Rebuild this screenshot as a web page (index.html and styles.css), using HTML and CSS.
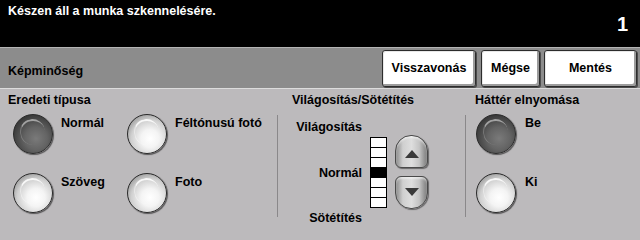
FILE: index.html
```html
<!DOCTYPE html>
<html lang="hu">
<head>
<meta charset="utf-8">
<title>Képminőség</title>
<link rel="stylesheet" href="styles.css">
</head>
<body>
<div class="screen">
  <header class="status">
    <div class="msg">Készen áll a munka szkennelésére.</div>
    <div class="count">1</div>
  </header>
  <div class="toolbar">
    <div class="title">Képminőség</div>
    <div class="actions">
      <button class="btn btn-undo">Visszavonás</button>
      <button class="btn btn-cancel">Mégse</button>
      <button class="btn btn-save">Mentés</button>
    </div>
  </div>
  <div class="panel">
    <section class="group group-type">
      <h2 class="group-title">Eredeti típusa</h2>
      <div class="group-body">
        <div class="radio-grid">
          <div class="option"><span class="radio on"></span><span class="label">Normál</span></div>
          <div class="option"><span class="radio"></span><span class="label">Féltónusú fotó</span></div>
          <div class="option"><span class="radio"></span><span class="label">Szöveg</span></div>
          <div class="option"><span class="radio"></span><span class="label">Foto</span></div>
        </div>
      </div>
    </section>
    <section class="group group-density">
      <h2 class="group-title">Világosítás/Sötétítés</h2>
      <div class="group-body">
        <div class="sep"></div>
        <div class="density-labels">
          <span>Világosítás</span>
          <span>Normál</span>
          <span>Sötétítés</span>
        </div>
        <div class="scale">
          <div class="cell"></div>
          <div class="cell"></div>
          <div class="cell"></div>
          <div class="cell active"></div>
          <div class="cell"></div>
          <div class="cell"></div>
          <div class="cell"></div>
        </div>
        <div class="arrows">
          <button class="arrow arrow-up"><svg width="14" height="8" viewBox="0 0 14 8"><polygon points="7,0 14,8 0,8" fill="#3a3a3a"/></svg></button>
          <button class="arrow arrow-down"><svg width="14" height="8" viewBox="0 0 14 8"><polygon points="0,0 14,0 7,8" fill="#3a3a3a"/></svg></button>
        </div>
      </div>
    </section>
    <section class="group group-bg">
      <h2 class="group-title">Háttér elnyomása</h2>
      <div class="group-body">
        <div class="sep"></div>
        <div class="radio-col">
          <div class="option"><span class="radio on"></span><span class="label">Be</span></div>
          <div class="option"><span class="radio"></span><span class="label">Ki</span></div>
        </div>
      </div>
    </section>
  </div>
</div>
</body>
</html>
```
FILE: styles.css
```css
* { box-sizing: border-box; }
html, body { margin: 0; padding: 0; }
body {
  width: 640px;
  height: 240px;
  overflow: hidden;
  background: #bcbabc;
  font-family: "Liberation Sans", Arial, sans-serif;
  font-weight: bold;
  font-size: 12.5px;
  color: #000;
  white-space: nowrap;
}
.screen { width: 640px; height: 240px; display: flex; flex-direction: column; }

.status {
  height: 47px;
  background: #000;
  color: #fff;
  display: flex;
  justify-content: space-between;
  align-items: flex-start;
  padding: 3px 12px 0 8px;
}
.msg { line-height: 16px; }
.count { font-size: 20px; line-height: 20px; margin-top: 11px; }

.toolbar {
  height: 42px;
  background: #8c8c8c;
  border-top: 1px solid #b4b4b4;
  border-bottom: 1px solid #dcdcdc;
  display: flex;
  justify-content: space-between;
  align-items: stretch;
  padding: 2px 3px 0 8px;
}
.title { line-height: 16px; align-self: center; padding-top: 3px; }
.actions { display: flex; gap: 4px; }
.btn {
  font: inherit;
  color: #000;
  background: #fff;
  border: 1px solid #2c2c2c;
  border-radius: 3px;
  box-shadow: inset -2px -2px 0 #9c9c9c, inset 1px 1px 0 #e8e8e8, 1px 1px 0 #4c4c4c;
  padding: 0 0 2px 0;
  height: 37px;
}
.btn-undo { width: 94px; }
.btn-cancel { width: 59px; margin-left: 1px; }
.btn-save { width: 93px; }

.panel { flex: 1; display: flex; }
.group { display: flex; flex-direction: column; }
.group-title {
  margin: 0;
  font-size: 12.5px;
  line-height: 16px;
  padding-top: 3px;
  font-weight: bold;
}
.group-body { display: flex; margin-top: 6px; align-items: flex-start; }
.sep { width: 1px; height: 102px; margin-top: 1px; background: #8a888a; }

.group-type { width: 277px; }
.group-type .group-title { padding-left: 8px; }
.radio-grid {
  display: grid;
  grid-template-columns: 114px auto;
  grid-auto-rows: 59px;
  padding-left: 13px;
}

.option { display: flex; align-items: flex-start; gap: 8px; }
.label { line-height: 16px; margin-top: 1px; }

.radio {
  position: relative;
  width: 40px;
  height: 40px;
  flex: none;
  border-radius: 50%;
  border: 1px solid #2a2a2a;
  background: radial-gradient(circle at 58% 62%, #ffffff 0%, #f4f4f4 28%, #d0d0d0 58%, #8e8e8e 85%, #5a5a5a 100%);
  box-shadow: 1px 1px 1px rgba(0,0,0,0.55);
}
.radio::after {
  content: "";
  position: absolute;
  left: 6px; top: 4px;
  width: 24px; height: 24px;
  border-radius: 50%;
  border-top: 2px solid rgba(255,255,255,0.85);
  border-left: 1px solid rgba(255,255,255,0.4);
  border-right: 0; border-bottom: 0;
  transform: rotate(-10deg);
}
.radio.on {
  background: radial-gradient(circle at 58% 62%, #7a7a7a 0%, #646464 35%, #3e3e3e 70%, #1c1c1c 100%);
}
.radio.on::after { border-top-color: rgba(200,200,200,0.7); border-left-color: rgba(200,200,200,0.3); }

.group-density { width: 188px; }
.group-density .group-title { padding-left: 15px; }
.density-labels {
  width: 84px;
  height: 107px;
  margin-top: 5px;
  display: flex;
  flex-direction: column;
  justify-content: space-between;
  align-items: flex-end;
  line-height: 16px;
}
.scale {
  margin-top: 23px;
  margin-left: 8px;
  width: 17px;
  border: 1px solid #000;
  border-top: 0;
  background: #fff;
}
.cell { height: 10px; border-top: 1px solid #000; background: #fff; }
.cell.active { background: #000; }
.arrows { margin-left: 8px; margin-top: 21px; display: flex; flex-direction: column; gap: 8px; }
.arrow {
  width: 33px;
  height: 33px;
  padding: 0;
  border: 1px solid #4a4a4a;
  background: linear-gradient(90deg, #8a8a8a 0%, #cfcfcf 22%, #dedede 50%, #c4c4c4 75%, #7a7a7a 100%);
  box-shadow: inset 0 2px 2px rgba(255,255,255,0.5), 1px 1px 1px rgba(0,0,0,0.45);
  display: flex;
  align-items: center;
  justify-content: center;
}
.arrow-up { border-radius: 16px 16px 6px 6px; padding-top: 4px; }
.arrow-down { border-radius: 6px 6px 16px 16px; padding-bottom: 2px; }

.group-bg { flex: 1; }
.group-bg .group-title { padding-left: 10px; }
.radio-col {
  margin-left: 10px;
  display: grid;
  grid-auto-rows: 59px;
}
.group-bg .option { gap: 9px; }
```
